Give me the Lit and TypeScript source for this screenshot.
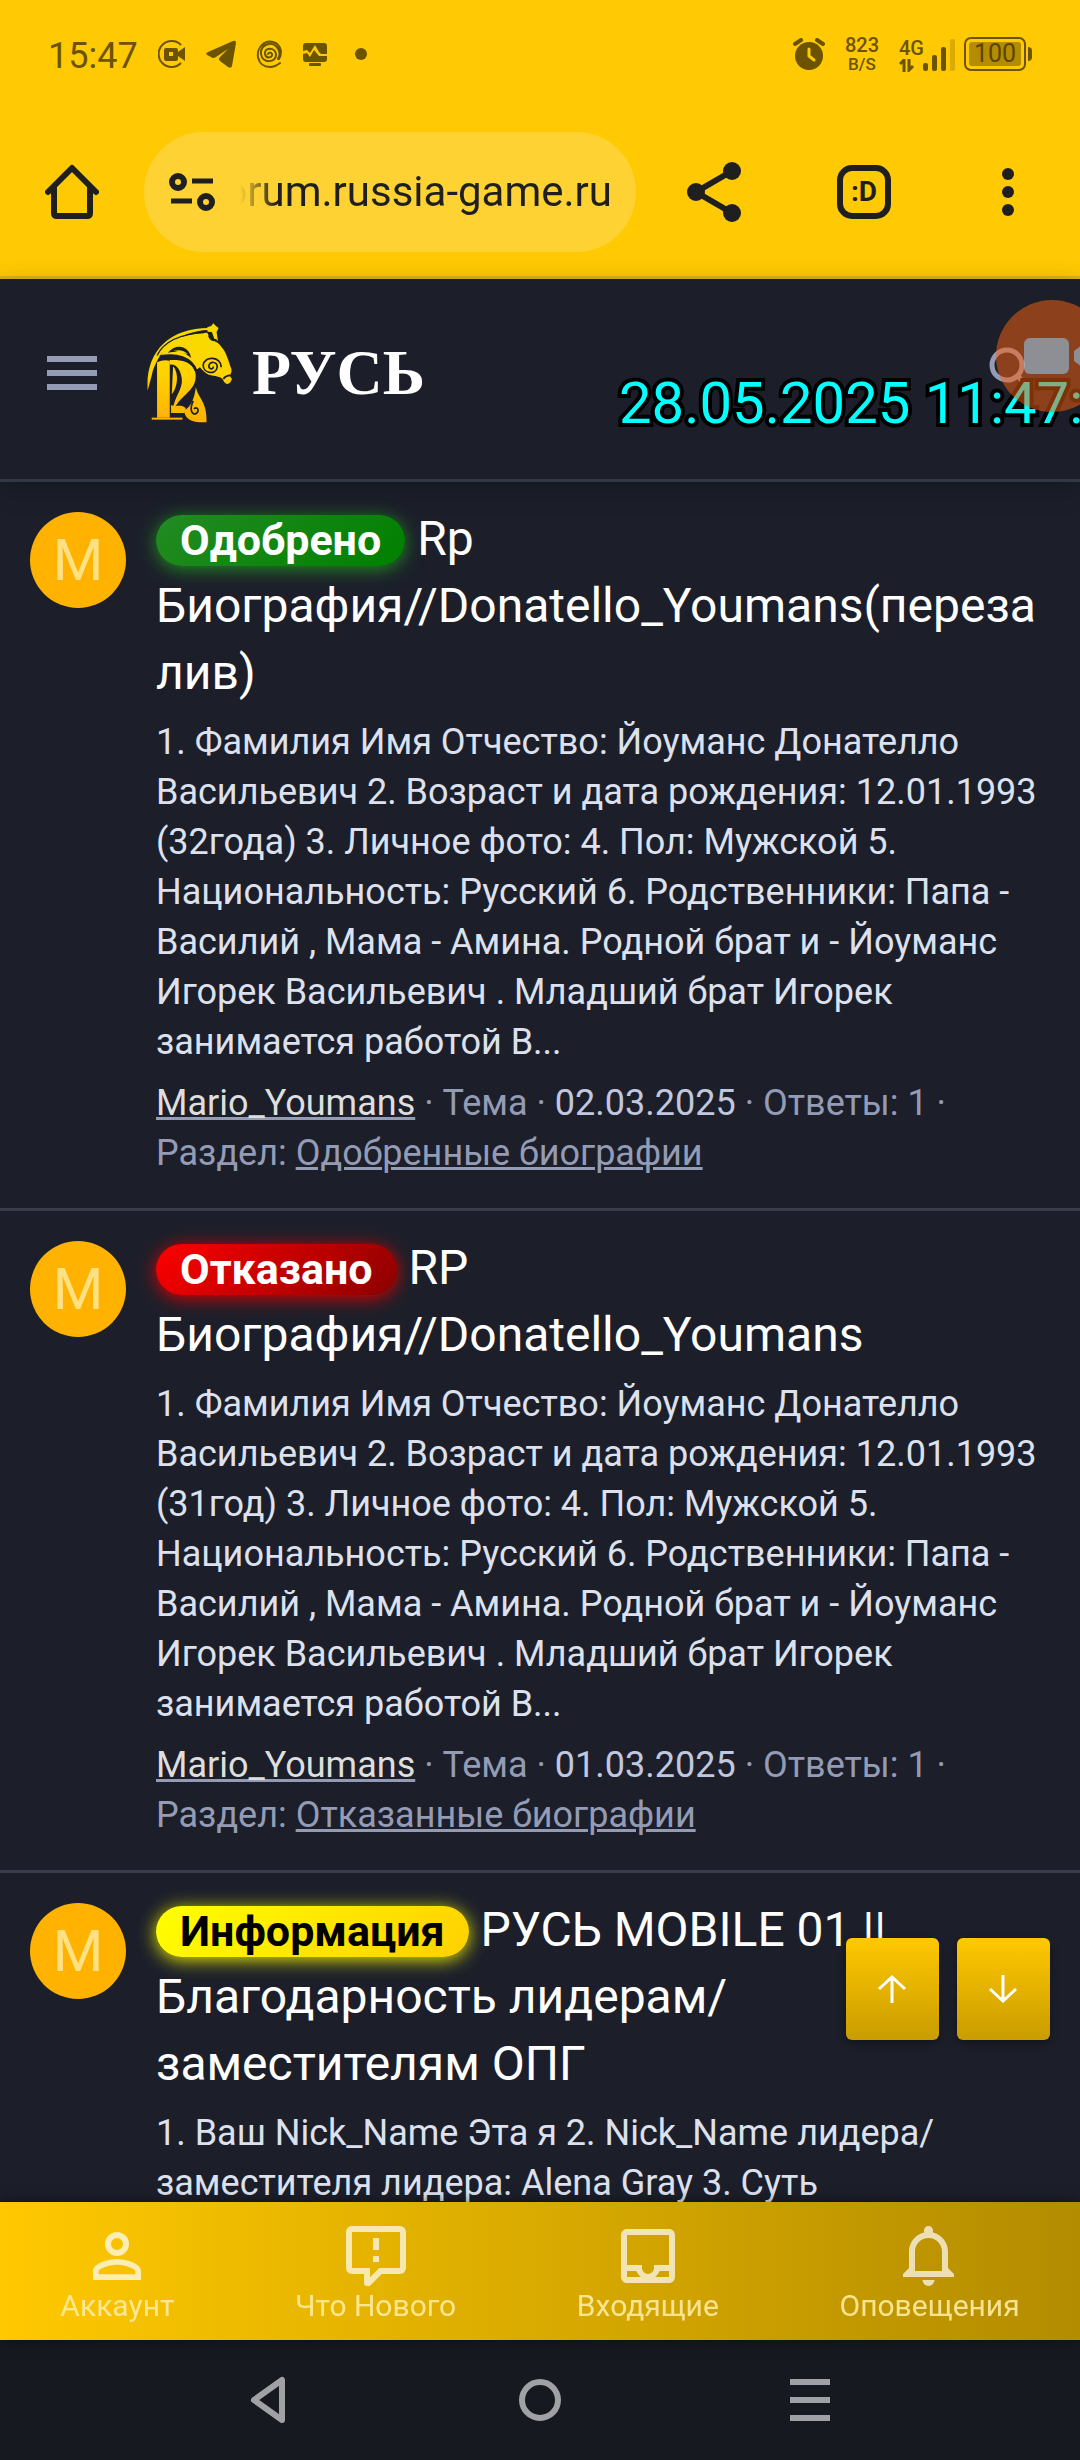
import { LitElement, html, css, svg, TemplateResult } from "lit";
import { customElement, property } from "lit/decorators.js";

interface Thread {
  status: "approved" | "denied" | "info";
  label: string;
  title: string;
  text: string;
  author: string;
  date: string;
  section: string;
}

const THREADS: Thread[] = [
  {
    status: "approved",
    label: "Одобрено",
    title: "Rp Биография//Donatello_Youmans(перезалив)",
    text: "1. Фамилия Имя Отчество: Йоуманс Донателло Васильевич 2. Возраст и дата рождения: 12.01.1993 (32года) 3. Личное фото: 4. Пол: Мужской 5. Национальность: Русский 6. Родственники: Папа - Василий , Мама - Амина. Родной брат и - Йоуманс Игорек Васильевич . Младший брат Игорек занимается работой В...",
    author: "Mario_Youmans",
    date: "02.03.2025",
    section: "Одобренные биографии",
  },
  {
    status: "denied",
    label: "Отказано",
    title: "RP Биография//Donatello_Youmans",
    text: "1. Фамилия Имя Отчество: Йоуманс Донателло Васильевич 2. Возраст и дата рождения: 12.01.1993 (31год) 3. Личное фото: 4. Пол: Мужской 5. Национальность: Русский 6. Родственники: Папа - Василий , Мама - Амина. Родной брат и - Йоуманс Игорек Васильевич . Младший брат Игорек занимается работой В...",
    author: "Mario_Youmans",
    date: "01.03.2025",
    section: "Отказанные биографии",
  },
  {
    status: "info",
    label: "Информация",
    title: "РУСЬ MOBILE 01 || Благодарность лидерам/заместителям ОПГ",
    text: "1. Ваш Nick_Name Эта я 2. Nick_Name лидера/заместителя лидера: Alena Gray 3. Суть",
    author: "",
    date: "",
    section: "",
  },
];

const TABS: { label: string; path: string }[] = [
  {
    label: "Аккаунт",
    path: "M12,4A4,4 0 0,1 16,8A4,4 0 0,1 12,12A4,4 0 0,1 8,8A4,4 0 0,1 12,4M12,6A2,2 0 0,0 10,8A2,2 0 0,0 12,10A2,2 0 0,0 14,8A2,2 0 0,0 12,6M12,13C14.67,13 20,14.33 20,17V20H4V17C4,14.33 9.33,13 12,13M12,14.9C9.03,14.9 5.9,16.36 5.9,17V18.1H18.1V17C18.1,16.36 14.97,14.9 12,14.9Z",
  },
  {
    label: "Что Нового",
    path: "M9,22A1,1 0 0,1 8,21V18H4A2,2 0 0,1 2,16V4C2,2.89 2.9,2 4,2H20A2,2 0 0,1 22,4V16A2,2 0 0,1 20,18H13.9L10.2,21.71C10,21.9 9.75,22 9.5,22H9M10,16V19.08L13.08,16H20V4H4V16H10M13,10H11V6H13V10M13,14H11V12H13V14Z",
  },
  {
    label: "Входящие",
    path: "M19,3H5C3.9,3 3,3.9 3,5V19C3,20.1 3.9,21 5,21H19C20.1,21 21,20.1 21,19V5C21,3.9 20.1,3 19,3M5,19V17H8.13C8.48,17.77 9,18.5 9.61,19H5M19,19H14.39C15,18.5 15.5,17.77 15.87,17H19V19M19,15H14V16A2,2 0 0,1 12,18A2,2 0 0,1 10,16V15H5V5H19V15Z",
  },
  {
    label: "Оповещения",
    path: "M16,17H7V10.5C7,8 9,6 11.5,6C14,6 16,8 16,10.5M18,16V10.5C18,7.43 15.86,4.86 13,4.18V3.5A1.5,1.5 0 0,0 11.5,2A1.5,1.5 0 0,0 10,3.5V4.18C7.13,4.86 5,7.43 5,10.5V16L3,18V19H20V18M11.5,22A2,2 0 0,0 13.5,20H9.5A2,2 0 0,0 11.5,22Z",
  },
];

/* Draws an icon at its natural size. */
const icon = (w: number, h: number, body: TemplateResult) =>
  html`<svg width=${w} height=${h} viewBox="0 0 ${w} ${h}" aria-hidden="true">${body}</svg>`;

@customElement("status-bar")
class StatusBar extends LitElement {
  static styles = css`
    :host {
      display: flex;
      align-items: center;
      justify-content: space-between;
      height: 108px;
      padding: 0 48px 0 48px;
      color: #6b5300;
      font-family: Roboto, "Liberation Sans", sans-serif;
    }
    svg {
      display: block;
      flex: none;
    }
    .group {
      display: flex;
      align-items: center;
      gap: 20px;
    }
    .time {
      padding-top: 3px;
      font-size: 36px;
      line-height: 42px;
    }
    .stack {
      display: flex;
      flex-direction: column;
      align-items: center;
      font-weight: 500;
      font-size: 20px;
      line-height: 20px;
    }
    .unit {
      font-size: 17px;
      line-height: 18px;
    }
    .network {
      display: flex;
      align-items: flex-end;
      height: 36px;
    }
    .net {
      display: flex;
      flex-direction: column;
      align-items: flex-start;
      margin-right: -2px;
      font-weight: 500;
      font-size: 20px;
      line-height: 22px;
    }
    .power {
      display: flex;
      align-items: center;
      margin-left: -12px;
      gap: 2px;
    }
    .battery {
      box-sizing: border-box;
      width: 62px;
      height: 34px;
      padding: 3px;
      border: 2px solid #6b5300;
      border-radius: 7px;
    }
    .charge {
      border-radius: 3px;
      background: #b38c00;
      color: #5a4500;
      font-size: 25px;
      line-height: 24px;
      text-align: center;
    }
    .knob {
      width: 4px;
      height: 14px;
      border-radius: 0 4px 4px 0;
      background: #6b5300;
    }
  `;
  render() {
    return html`
      <div class="group">
        <span class="time">15:47</span>
        ${icon(28, 28, svg`<path d="M23 5A13 13 0 1 0 23 23" fill="none" stroke="#6b5300" stroke-width="2"/><path fill="#6b5300" fill-rule="evenodd" d="M8 8h10q2 0 2 2v2l7-5v14l-7-5v3q0 2-2 2H8q-2 0-2-2v-9q0-2 2-2zM11 12v4h4v-4z"/>`)}
        ${icon(30, 28, svg`<path fill="#6b5300" d="M1 15Q-1 13 2 12L27 1q3-1 3 2L26 26q-1 3-4 1L14 21q-2-2 0-4L22 9 10 17q-3 2-5 0z"/>`)}
        ${icon(27, 28, svg`<path fill="none" stroke="#6b5300" stroke-width="2" stroke-linecap="round" d="M12 14q2-3 4 0c1 4-6 5-7 0-1-7 10-7 11 0 1 9-14 10-15 0C4 5 15 1 20 6q6 6 2 13M7 4C-2 11 1 27 14 27q5 0 10-4M6 5c6-6 17-4 19 6q0 5-2 8"/>`)}
        ${icon(32, 28, svg`<g transform="translate(0 2)"><path fill="#6b5300" d="M3 1h18q3 0 3 3v8h-6l-2-2-4-7-5 8-3-3-4 1V4q0-3 3-3zM0 12l4-1 3 4 4-7 5 6h8v3q0 3-3 3H3q-3 0-3-3z"/><rect x="6" y="21" width="12" height="3" rx="1" fill="#6b5300"/></g>`)}
        ${icon(12, 12, svg`<circle cx="6" cy="6" r="6" fill="#6b5300"/>`)}
      </div>
      <div class="group">
        ${icon(32, 32, svg`<circle cx="16" cy="18" r="14" fill="#6b5300"/><path d="M2 6l6-4M30 6l-6-4" stroke="#6b5300" stroke-width="4" stroke-linecap="round"/><path d="M16 11v7l5 4" stroke="#ffc904" stroke-width="3" fill="none" stroke-linecap="round"/>`)}
        <div class="stack"><span>823</span><span class="unit">B/S</span></div>
        <div class="network">
          <div class="net">
            <span>4G</span>
            ${icon(16, 13, svg`<path d="M1 5l4-4v12M10 0v11l4-4" fill="none" stroke="#6b5300" stroke-width="3"/>`)}
          </div>
          ${icon(34, 34, svg`<g fill="#6b5300"><rect x="1" y="25" width="5" height="8" rx="2"/><rect x="10" y="17" width="5" height="16" rx="2"/><rect x="19" y="9" width="5" height="24" rx="2"/><rect x="28" y="1" width="5" height="32" rx="2" opacity=".25"/></g>`)}
        </div>
        <div class="power">
          <div class="battery"><div class="charge">100</div></div>
          <div class="knob"></div>
        </div>
      </div>
    `;
  }
}

@customElement("browser-bar")
class BrowserBar extends LitElement {
  static styles = css`
    :host {
      display: flex;
      align-items: center;
      height: 120px;
      padding: 24px 0;
      border-bottom: 3px solid #dfb317;
      color: #1f1f1f;
      font-family: Roboto, "Liberation Sans", sans-serif;
    }
    svg {
      display: block;
    }
    button {
      display: grid;
      place-items: center;
      flex: none;
      width: 144px;
      height: 120px;
      margin: 0;
      padding: 0;
      border: 0;
      background: none;
      color: inherit;
      font: inherit;
    }
    .pill {
      display: flex;
      align-items: center;
      flex: 1;
      min-width: 0;
      box-sizing: border-box;
      height: 120px;
      padding: 0 24px 0 0;
      border-radius: 60px;
      background: #ffd233;
    }
    .pill button {
      width: 96px;
    }
    .clip {
      display: flex;
      justify-content: flex-end;
      flex: 1;
      min-width: 0;
      overflow: hidden;
      mask-image: linear-gradient(to right, transparent, #000 36px);
    }
    input {
      flex: none;
      width: 420px;
      padding: 0;
      border: 0;
      outline: 0;
      background: none;
      color: inherit;
      font: inherit;
      font-size: 42px;
      line-height: 56px;
      text-align: right;
    }
    .share {
      width: 156px;
    }
    .tabs {
      box-sizing: border-box;
      width: 54px;
      height: 54px;
      border: 6px solid #1f1f1f;
      border-radius: 15px;
      font-size: 28px;
      font-weight: 700;
      line-height: 42px;
    }
  `;
  render() {
    return html`
      <button aria-label="Домой">
        ${icon(54, 56, svg`<path fill="none" stroke="#1f1f1f" stroke-width="6" stroke-linecap="round" stroke-linejoin="round" d="M3 28L27 4l24 24M9 24v25q0 3 3 3h30q3 0 3-3V24"/>`)}
      </button>
      <div class="pill">
        <button aria-label="Сведения о сайте">
          ${icon(46, 40, svg`<g fill="none" stroke="#1f1f1f"><circle cx="9" cy="10" r="6" stroke-width="6"/><path d="M23 9h21M2 29h21" stroke-width="5"/><circle cx="37" cy="30" r="6" stroke-width="6"/></g>`)}
        </button>
        <div class="clip">
          <input type="text" aria-label="Адрес сайта" value="forum.russia-game.ru" />
        </div>
      </div>
      <button class="share" aria-label="Поделиться">
        ${icon(54, 60, svg`<path d="M45 9L9 30l36 21" fill="none" stroke="#1f1f1f" stroke-width="6"/><g fill="#1f1f1f"><circle cx="45" cy="9" r="9"/><circle cx="9" cy="30" r="9"/><circle cx="45" cy="51" r="9"/></g>`)}
      </button>
      <button aria-label="Вкладки"><span class="tabs">:D</span></button>
      <button aria-label="Меню">
        ${icon(12, 48, svg`<g fill="#1f1f1f"><circle cx="6" cy="6" r="6"/><circle cx="6" cy="24" r="6"/><circle cx="6" cy="42" r="6"/></g>`)}
      </button>
    `;
  }
}

@customElement("forum-header")
class ForumHeader extends LitElement {
  static styles = css`
    :host {
      position: relative;
      z-index: 1;
      display: flex;
      align-items: center;
      box-sizing: border-box;
      height: 203px;
      padding: 0 0 12px 47px;
      border-bottom: 3px solid #333846;
      background: #1c1f2a;
      box-shadow: 0 6px 24px rgba(0, 0, 0, 0.25);
      font-family: Roboto, "Liberation Sans", sans-serif;
    }
    svg {
      display: block;
    }
    button {
      flex: none;
      margin: 0;
      padding: 0;
      border: 0;
      background: none;
    }
    .logo {
      display: flex;
      align-items: center;
      gap: 18px;
      margin-left: 50px;
      color: #fff;
      font-family: "Liberation Serif", serif;
      font-size: 64px;
      font-weight: 700;
      line-height: 80px;
      text-decoration: none;
    }
    .search {
      position: absolute;
      left: calc(100% - 91px);
      top: 68px;
    }
    .clock {
      position: absolute;
      left: calc(100% - 461px);
      top: 90px;
      color: #0ff;
      font-size: 58px;
      line-height: 68px;
      white-space: nowrap;
      -webkit-text-stroke: 8px #000;
      paint-order: stroke fill;
    }
    .overlay {
      position: absolute;
      inset: 0;
      overflow: hidden;
      pointer-events: none;
    }
    .recorder {
      position: absolute;
      left: calc(100% - 84px);
      top: 21px;
      opacity: 0.5;
    }
  `;
  render() {
    return html`
      <button aria-label="Навигация">
        ${icon(50, 34, svg`<path d="M0 3h50M0 17h50M0 31h50" stroke="#949bb5" stroke-width="6"/>`)}
      </button>
      <a class="logo" href="#">
        <svg width="87" height="102" viewBox="20 20 260 305" aria-hidden="true">
          <defs>
            <linearGradient id="gold" gradientUnits="userSpaceOnUse" x1="0" y1="30" x2="0" y2="320">
              <stop offset="0" stop-color="#f5dc00" />
              <stop offset=".5" stop-color="#ffd300" />
              <stop offset="1" stop-color="#ffb000" />
            </linearGradient>
          </defs>
          <g fill="url(#gold)">
            <path d="M22 225C14 110 85 38 205 38v6C110 46 50 110 34 180z" />
            <path d="M62 118C82 75 130 54 200 52c10 26 32 24 42 42 14 14 20 38 30 66 4 14-10 18 2 30-4 16-18 22-26 4-10-14-24-10-43-16-12-6-20-16-27-23l-13 10C150 130 110 118 62 118z" />
            <path d="M200 36l12-4 6-8 8 8 8 6-6 12 4 26-10-4-8-22-13-1z" />
            <path d="M50 140q18-8 38-4v170H50z" />
            <path d="M34 306h92v6H34z" />
            <path d="M88 134c66-4 84 30 76 62-8 34-44 44-68 92 4-44 32-66 28-98-4-30-18-46-36-42z" />
            <path d="M98 152c18 20 14 62-4 84z" />
            <path d="M92 268c14 8 30-4 44 10l-4 14H92z" />
            <path d="M166 214c8 36 34 44 32 106h-24c-26-2-44-16-42-36 20-12 30-36 34-70z" />
          </g>
          <g fill="none" stroke="#1c1f2a" stroke-width="5">
            <path d="M242 155c0-32-50-36-54-6 0 26 38 30 42 6 0-18-24-18-25-4 0 12 14 12 13 2" />
            <path d="M158 256c-12 26-4 42 8 38 12-6 6-24-6-14" />
            <path d="M58 124c50-10 94 2 110 44" stroke-width="8" />
            <path d="M248 190q10-12 24-10" />
            <path d="M206 60q4 16 22 14" stroke-width="7" />
            <path d="M50 120C70 80 120 56 190 52" stroke-width="4" />
          </g>
          <path d="M82 112c24-30 64-22 70 16-20-20-42-22-70-16z" fill="#1c1f2a" />
          <path d="M100 106q26-6 42 10-20-2-42-10z" fill="url(#gold)" />
        </svg>
        <span>РУСЬ</span>
      </a>
      <button class="search" aria-label="Поиск">
        ${icon(40, 40, svg`<circle cx="18" cy="18" r="15" fill="none" stroke="#949bb5" stroke-width="5"/><path d="M29 29l5 6" stroke="#949bb5" stroke-width="5"/>`)}
      </button>
      <div class="overlay">
        <time class="clock">28.05.2025 11:47:</time>
        <svg class="recorder" width="112" height="112" viewBox="0 0 112 112" aria-hidden="true">
          <circle cx="56" cy="56" r="56" fill="#fc6110" />
          <rect x="28" y="38" width="45" height="36" rx="6" fill="#fff" />
          <path d="M78 51l16-12v34L78 61z" fill="#fff" />
        </svg>
      </div>
    `;
  }
}

@customElement("thread-card")
class ThreadCard extends LitElement {
  @property({ attribute: false }) thread!: Thread;

  static styles = css`
    :host {
      display: flex;
      flex: none;
      gap: 30px;
      padding: 23px 30px 30px;
      border-bottom: 3px solid #393d4b;
      color: #dde1ee;
      font-family: Roboto, "Liberation Sans", sans-serif;
    }
    .avatar {
      flex: none;
      width: 96px;
      height: 96px;
      margin-top: 7px;
      border-radius: 50%;
      background: #ffb300;
      color: #ffe082;
      font-size: 58px;
      line-height: 96px;
      text-align: center;
      text-decoration: none;
    }
    .body {
      flex: 1;
      min-width: 0;
    }
    h3 {
      margin: 0 0 11px;
      color: #fff;
      font-size: 48px;
      font-weight: 400;
      line-height: 67px;
      overflow-wrap: anywhere;
    }
    h3 a {
      color: inherit;
      text-decoration: none;
    }
    .badge {
      display: inline-block;
      padding: 0 24px;
      border-radius: 26px;
      font-size: 43px;
      font-weight: 700;
      line-height: 51px;
    }
    .approved {
      background: linear-gradient(135deg, #228b22, #008000);
      box-shadow: 0 3px 18px #228b22;
    }
    .denied {
      background: linear-gradient(135deg, #ff0000, #8b0000);
      box-shadow: 0 3px 18px #e00000;
    }
    .info {
      background: linear-gradient(135deg, #ffff00, #ffd000);
      box-shadow: 0 3px 18px #e6e600;
      color: #000;
    }
    p {
      margin: 0;
      font-size: 36px;
      line-height: 50px;
    }
    .meta {
      margin-top: 11px;
      color: #949bb5;
    }
    .meta a {
      color: inherit;
      text-decoration: underline #949bb5 3px;
      text-underline-offset: 2px;
    }
    .meta .author {
      color: #dedede;
    }
    time {
      color: #c0c7de;
    }
  `;
  render() {
    const t = this.thread;
    return html`
      <a class="avatar" href="#" aria-label="Mario_Youmans">M</a>
      <div class="body">
        <h3><a href="#"><span class="badge ${t.status}">${t.label}</span> ${t.title}</a></h3>
        <p>${t.text}</p>
        ${t.author
          ? html`<p class="meta"><a class="author" href="#">${t.author}</a> · Тема · <time>${t.date}</time> · Ответы: 1 · Раздел: <a href="#">${t.section}</a></p>`
          : null}
      </div>
    `;
  }
}

@customElement("app-root")
class AppRoot extends LitElement {
  static styles = css`
    :host {
      display: flex;
      flex-direction: column;
      height: 100vh;
      overflow: hidden;
      background: #1c1f2a;
      font-family: Roboto, "Liberation Sans", sans-serif;
    }
    .chrome {
      background: #ffc904;
    }
    svg {
      display: block;
    }
    button {
      margin: 0;
      padding: 0;
      border: 0;
    }
    .feed {
      position: relative;
      display: flex;
      flex-direction: column;
      flex: 1;
      min-height: 0;
      overflow: hidden;
    }
    .jump {
      position: absolute;
      right: 30px;
      bottom: 162px;
      display: flex;
      gap: 18px;
    }
    .jump button {
      display: grid;
      place-items: center;
      width: 93px;
      height: 102px;
      border-radius: 6px;
      background: linear-gradient(#ffc800, #c99c00);
      box-shadow: 0 3px 8px rgba(0, 0, 0, 0.4);
    }
    .tabs {
      position: relative;
      display: flex;
      justify-content: space-around;
      flex: none;
      height: 120px;
      padding-top: 18px;
      background: linear-gradient(to right, #ffc800, #b38c00);
      box-shadow: 0 0 12px rgba(0, 0, 0, 0.5);
    }
    .tab {
      display: flex;
      flex-direction: column;
      align-items: center;
      color: rgba(255, 255, 255, 0.7);
      font-size: 30px;
      line-height: 28px;
      text-decoration: none;
    }
    .tab span {
      color: #ffeca0;
      opacity: 0.9;
    }
    .system {
      display: flex;
      flex: none;
      height: 120px;
      padding: 0 12.5%;
      background: #161a20;
    }
    .system button {
      display: grid;
      place-items: center;
      flex: 1;
      background: none;
    }
  `;
  render() {
    return html`
      <div class="chrome">
        <status-bar></status-bar>
        <browser-bar></browser-bar>
      </div>
      <forum-header></forum-header>
      <main class="feed">
        ${THREADS.map((t) => html`<thread-card .thread=${t}></thread-card>`)}
        <div class="jump">
          <button aria-label="Вверх">
            ${icon(34, 32, svg`<path d="M16 30V4M3 16L16 4l13 12" fill="none" stroke="#fff" stroke-width="3"/>`)}
          </button>
          <button aria-label="Вниз">
            ${icon(34, 32, svg`<path d="M16 2v26M3 16l13 12 13-12" fill="none" stroke="#fff" stroke-width="3"/>`)}
          </button>
        </div>
      </main>
      <nav class="tabs">
        ${TABS.map(
          (tab) => html`<a class="tab" href="#">
            <svg width="72" height="72" viewBox="0 0 24 24" fill="currentColor" aria-hidden="true"><path d=${tab.path} /></svg>
            <span>${tab.label}</span>
          </a>`
        )}
      </nav>
      <div class="system">
        <button aria-label="Назад">
          ${icon(40, 48, svg`<path d="M32 4v40L4 24z" fill="none" stroke="#a0a1a4" stroke-width="6" stroke-linejoin="round"/>`)}
        </button>
        <button aria-label="Главный экран">
          ${icon(42, 42, svg`<circle cx="21" cy="21" r="18" fill="none" stroke="#a0a1a4" stroke-width="6"/>`)}
        </button>
        <button aria-label="Недавние">
          ${icon(40, 42, svg`<path d="M0 3h40M0 21h40M0 39h40" stroke="#a0a1a4" stroke-width="6"/>`)}
        </button>
      </div>
    `;
  }
}
